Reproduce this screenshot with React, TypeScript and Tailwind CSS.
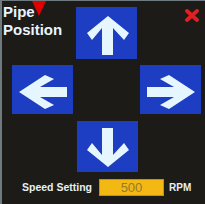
import React from "react";

const V_UP = "21,0 42,17 37,24 26,12 26,39 15,39 15,12 5,24 0,17";
const V_DOWN = "21,39 42,22 37,15 26,27 26,0 15,0 15,27 5,15 0,22";
const H_LEFT = "0,17 26,0 35,4 21,12 48,12 48,22 21,22 35,30 26,34";
const H_RIGHT = "48,17 22,0 13,4 27,12 0,12 0,22 27,22 13,30 22,34";

function Btn({ dir, h }: { dir: "up" | "down" | "left" | "right"; h: string }) {
  const vertical = dir === "up" || dir === "down";
  const pts = dir === "up" ? V_UP : dir === "down" ? V_DOWN : dir === "left" ? H_LEFT : H_RIGHT;
  return (
    <div className={`bg-[#1d3dc2] ${h} w-[61px] flex items-center justify-center`}>
      {vertical ? (
        <svg className={dir === "up" ? "mt-[5px] ml-[2px]" : "mt-[2px]"} width="42" height="39" viewBox="0 0 42 39">
          <polygon points={pts} fill="#e6f6ff" />
        </svg>
      ) : (
        <svg className="mt-[4px]" width="48" height="34" viewBox="0 0 48 34">
          <polygon points={pts} fill="#e6f6ff" />
        </svg>
      )}
    </div>
  );
}

export default function App() {
  return (
    <div
      className="relative w-[205px] h-[204px] bg-[#1c1b18] overflow-hidden border-l-2 border-t border-[#6f7a80]"
      style={{ fontFamily: '"Liberation Sans", Arial, sans-serif' }}
    >
      <div className="grid grid-cols-[61px_61px_61px] gap-x-[3px] pl-[10px] pt-[6px]">
        <div className="-ml-[9px] -mt-[4px] text-[15px] leading-[18px] font-bold text-[#e8f4ff]">
          Pipe
          <br />
          Position
        </div>
        <Btn dir="up" h="h-[52px]" />
        <div className="flex justify-end pr-[2px] pt-[2px]">
          <svg width="14" height="13" viewBox="0 0 14 13">
            <path d="M2 2 L12 11 M12 2 L2 11" stroke="#e02020" strokeWidth="3.8" strokeLinecap="round" />
          </svg>
        </div>
        <div className="mt-[6px]">
          <Btn dir="left" h="h-[49px]" />
        </div>
        <div />
        <div className="mt-[6px]">
          <Btn dir="right" h="h-[49px]" />
        </div>
        <div />
        <div className="mt-[7px] ml-[1px]">
          <Btn dir="down" h="h-[51px]" />
        </div>
        <div />
      </div>
      <div className="flex items-center mt-[7px] pl-[20px]">
        <span className="text-[10.5px] font-bold text-[#e6f0f0] w-[77px]">Speed Setting</span>
        <div className="w-[65px] h-[17px] bg-[#f4b814] border border-[#c99000] flex items-center justify-center text-[13px] text-[#8f7c2c]">
          500
        </div>
        <span className="ml-[5px] text-[10px] font-bold text-[#e6f0f0]">RPM</span>
      </div>
      <svg className="absolute left-[30px] top-0" width="14" height="15" viewBox="0 0 14 15">
        <polygon points="0,0 14,0 7,15" fill="#e00000" />
      </svg>
    </div>
  );
}
